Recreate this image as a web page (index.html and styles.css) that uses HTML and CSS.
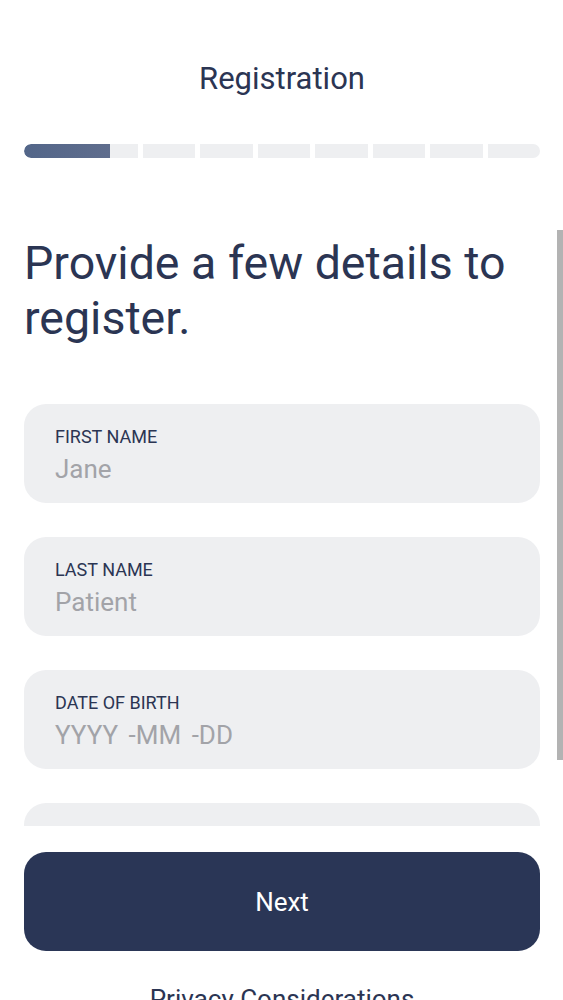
FILE: index.html
```html
<!DOCTYPE html>
<html lang="en">
<head>
<meta charset="utf-8">
<title>Registration</title>
<link rel="stylesheet" href="styles.css">
</head>
<body>
<div class="screen">
  <header class="top">
    <h1 class="title">Registration</h1>
    <div class="progress">
      <div class="seg seg-first"><div class="fill" style="width: 75%"></div></div>
      <div class="seg"></div>
      <div class="seg"></div>
      <div class="seg"></div>
      <div class="seg"></div>
      <div class="seg"></div>
      <div class="seg"></div>
      <div class="seg"></div>
    </div>
  </header>

  <main class="scroll">
    <h2 class="heading">Provide a few details to register.</h2>
    <div class="field">
      <div class="label">FIRST NAME</div>
      <div class="value">Jane</div>
    </div>
    <div class="field">
      <div class="label">LAST NAME</div>
      <div class="value">Patient</div>
    </div>
    <div class="field">
      <div class="label">DATE OF BIRTH</div>
      <div class="value date">YYYY -MM -DD</div>
    </div>
    <div class="field"></div>
    <div class="scrollbar"></div>
  </main>

  <footer class="bottom">
    <button class="next">Next</button>
    <div class="privacy">Privacy Considerations</div>
  </footer>
</div>
</body>
</html>
```
FILE: styles.css
```css
html, body {
  margin: 0;
  padding: 0;
  background: #ffffff;
}
body {
  font-family: Roboto, "Noto Sans", "Liberation Sans", sans-serif;
  color: #2b3553;
  overflow: hidden;
}
.screen {
  width: 563px;
  height: 1000px;
  overflow: hidden;
  display: flex;
  flex-direction: column;
}
.top {
  flex-shrink: 0;
  padding: 0 23px 0 24px;
}
.title {
  margin: 61px 0 0;
  font-size: 31px;
  line-height: 36px;
  font-weight: 400;
  text-align: center;
  color: #2b3553;
}
.progress {
  margin-top: 47px;
  height: 14px;
  border-radius: 7px;
  overflow: hidden;
  display: grid;
  grid-template-columns: 114px repeat(7, 1fr);
  column-gap: 5px;
}
.seg {
  background: #eeeff1;
  height: 100%;
}
.fill {
  height: 100%;
  background: linear-gradient(90deg, #536689, #5f6d8d);
  border-radius: 7px 0 0 7px;
}
.scroll {
  position: relative;
  flex-shrink: 0;
  height: 648px;
  margin-top: 20px;
  overflow: hidden;
  padding: 0 23px 0 24px;
}
.heading {
  margin: 58px 0 58px;
  font-size: 46.5px;
  line-height: 55px;
  font-weight: 400;
  color: #2b3553;
}
.field {
  background: #eeeff1;
  border-radius: 22px;
  height: 99px;
  box-sizing: border-box;
  padding: 22px 31px 19px;
  margin-bottom: 34px;
}
.label {
  font-size: 18px;
  line-height: 22px;
  color: #2b3553;
}
.value {
  margin-top: 6px;
  font-size: 26px;
  line-height: 30px;
  color: #a2a3a8;
}
.date {
  word-spacing: 4px;
}
.scrollbar {
  position: absolute;
  right: 0;
  top: 52px;
  width: 6px;
  height: 530px;
  background: #b3b3b3;
}
.bottom {
  flex-shrink: 0;
  padding: 26px 23px 0 24px;
}
.next {
  display: block;
  width: 100%;
  height: 99px;
  border: none;
  border-radius: 22px;
  background: #2a3656;
  color: #ffffff;
  font-family: Roboto, "Noto Sans", "Liberation Sans", sans-serif;
  font-size: 26px;
  font-weight: 400;
}
.privacy {
  margin-top: 33px;
  text-align: center;
  font-size: 26px;
  line-height: 30px;
  color: #2b3553;
}
```
